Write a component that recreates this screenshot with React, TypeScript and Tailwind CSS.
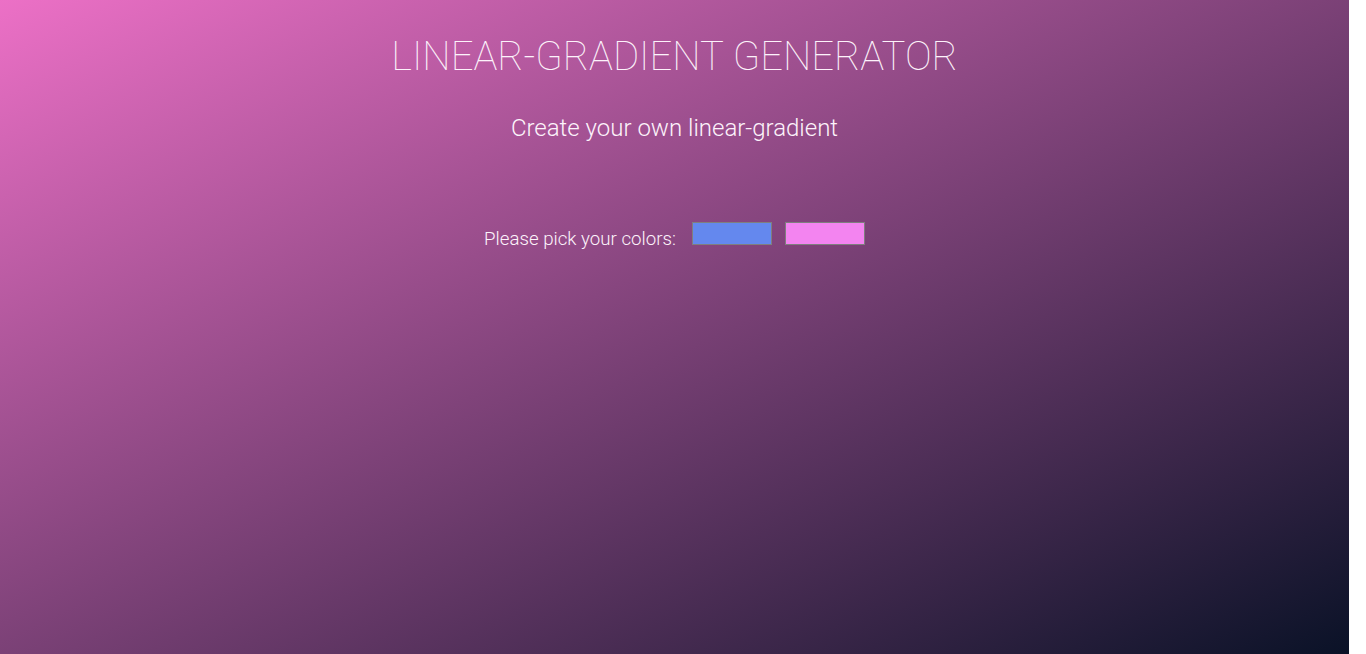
export default function App() {
  return (
    <div className="flex w-[1366px] h-[654px] bg-white overflow-hidden">
      <div
        className="w-[1349px] h-[654px] shrink-0 flex flex-col items-center bg-[linear-gradient(to_bottom_right,#ec70c6,#0a1227)] text-[#fdf3fb]"
        style={{ fontFamily: "Roboto, 'Liberation Sans', sans-serif" }}
      >
        <h1 className="mt-[30px] text-[40px] leading-[54px] font-thin">
          LINEAR-GRADIENT GENERATOR
        </h1>
        <h2 className="mt-[29px] text-[24px] leading-[30px] font-light">
          Create your own linear-gradient
        </h2>
        <div className="mt-[79px] flex items-start gap-[16px]">
          <span className="text-[18.7px] leading-[24px] font-light mt-[5px]">Please pick your colors:</span>
          <div className="flex gap-[13px]">
            <div className="w-[80px] h-[23px] border border-[#7f7f7f] bg-[#6488ee]" />
            <div className="w-[80px] h-[23px] border border-[#7f7f7f] bg-[#f384f0]" />
          </div>
        </div>
      </div>
    </div>
  );
}
